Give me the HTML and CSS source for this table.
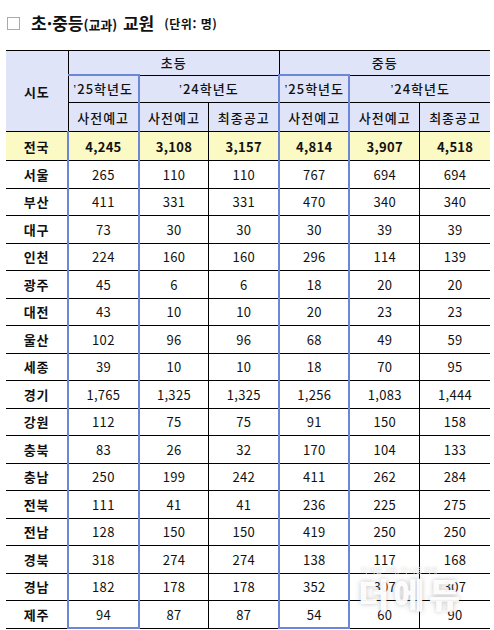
FILE: index.html
```html
<!DOCTYPE html>
<html lang="ko">
<head>
<meta charset="utf-8">
<link rel="stylesheet" href="styles.css">
</head>
<body>
<div class="page">
  <div class="title">
    <span class="box"></span>
    <span class="main">초·중등<span class="sub">(교과)</span> 교원</span>
    <span class="unit">(단위: 명)</span>
  </div>
  <table class="tbl">
    <colgroup>
      <col class="c0"><col class="c"><col class="c"><col class="c"><col class="c"><col class="c"><col class="c">
    </colgroup>
    <thead>
      <tr class="h1">
        <th rowspan="3" class="region">시도</th>
        <th colspan="3">초등</th>
        <th colspan="3">중등</th>
      </tr>
      <tr class="h2">
        <th class="hl hl-top"><span class="q">’</span>25학년도</th>
        <th colspan="2"><span class="q">’</span>24학년도</th>
        <th class="hl hl-top"><span class="q">’</span>25학년도</th>
        <th colspan="2"><span class="q">’</span>24학년도</th>
      </tr>
      <tr class="h3">
        <th class="hl">사전예고</th>
        <th>사전예고</th>
        <th>최종공고</th>
        <th class="hl">사전예고</th>
        <th>사전예고</th>
        <th>최종공고</th>
      </tr>
    </thead>
    <tbody>
      <tr class="total">
        <th>전국</th><td class="hl">4,245</td><td>3,108</td><td>3,157</td><td class="hl">4,814</td><td>3,907</td><td>4,518</td>
      </tr>
      <tr><th>서울</th><td class="hl">265</td><td>110</td><td>110</td><td class="hl">767</td><td>694</td><td>694</td></tr>
      <tr><th>부산</th><td class="hl">411</td><td>331</td><td>331</td><td class="hl">470</td><td>340</td><td>340</td></tr>
      <tr><th>대구</th><td class="hl">73</td><td>30</td><td>30</td><td class="hl">30</td><td>39</td><td>39</td></tr>
      <tr><th>인천</th><td class="hl">224</td><td>160</td><td>160</td><td class="hl">296</td><td>114</td><td>139</td></tr>
      <tr><th>광주</th><td class="hl">45</td><td>6</td><td>6</td><td class="hl">18</td><td>20</td><td>20</td></tr>
      <tr><th>대전</th><td class="hl">43</td><td>10</td><td>10</td><td class="hl">20</td><td>23</td><td>23</td></tr>
      <tr><th>울산</th><td class="hl">102</td><td>96</td><td>96</td><td class="hl">68</td><td>49</td><td>59</td></tr>
      <tr><th>세종</th><td class="hl">39</td><td>10</td><td>10</td><td class="hl">18</td><td>70</td><td>95</td></tr>
      <tr><th>경기</th><td class="hl">1,765</td><td>1,325</td><td>1,325</td><td class="hl">1,256</td><td>1,083</td><td>1,444</td></tr>
      <tr><th>강원</th><td class="hl">112</td><td>75</td><td>75</td><td class="hl">91</td><td>150</td><td>158</td></tr>
      <tr><th>충북</th><td class="hl">83</td><td>26</td><td>32</td><td class="hl">170</td><td>104</td><td>133</td></tr>
      <tr><th>충남</th><td class="hl">250</td><td>199</td><td>242</td><td class="hl">411</td><td>262</td><td>284</td></tr>
      <tr><th>전북</th><td class="hl">111</td><td>41</td><td>41</td><td class="hl">236</td><td>225</td><td>275</td></tr>
      <tr><th>전남</th><td class="hl">128</td><td>150</td><td>150</td><td class="hl">419</td><td>250</td><td>250</td></tr>
      <tr><th>경북</th><td class="hl">318</td><td>274</td><td>274</td><td class="hl">138</td><td>117</td><td>168</td></tr>
      <tr><th>경남</th><td class="hl">182</td><td>178</td><td>178</td><td class="hl">352</td><td>307</td><td>307</td></tr>
      <tr class="last"><th>제주</th><td class="hl">94</td><td>87</td><td>87</td><td class="hl">54</td><td>60</td><td>90</td></tr>
    </tbody>
  </table>
  <div class="watermark">
    <div class="wm-small">더 바른 교육, 더 나은 미래</div>
    <div class="wm-big">더에듀</div>
  </div>
</div>
</body>
</html>
```

FILE: styles.css
```css
html, body {
  margin: 0;
  padding: 0;
  background: #ffffff;
}

.page {
  position: relative;
  width: 494px;
  height: 630px;
  overflow: hidden;
  font-family: "Noto Sans CJK KR", "Noto Sans", sans-serif;
  color: #111;
}

.title {
  display: flex;
  align-items: center;
  height: 44px;
  padding-left: 7px;
  padding-top: 1px;
  box-sizing: border-box;
}

.box {
  width: 11px;
  height: 11px;
  border: 1px solid #c9a66e;
  margin-right: 11px;
  margin-top: 1px;
}

.main {
  font-weight: 700;
  font-size: 17px;
  letter-spacing: 0;
}

.sub {
  font-size: 13px;
  font-weight: 700;
  margin-right: 1px;
}

.unit {
  font-size: 12px;
  font-weight: 700;
  margin-left: 10px;
  margin-top: 2px;
  letter-spacing: 0.5px;
}

.tbl {
  margin-left: 6px;
  margin-top: 6px;
  width: 484px;
  border-collapse: collapse;
  table-layout: fixed;
  font-size: 13px;
}

.c0 { width: 62px; }
.c { width: 70px; }

.tbl th,
.tbl td {
  padding: 0;
  text-align: center;
  vertical-align: middle;
  border: 1px solid #000;
  line-height: 1;
}

.tbl tr > :first-child { border-left: none; }
.tbl tr > :last-child { border-right: none; }
.tbl thead th { border-top: 1px solid #000; }

.tbl thead th {
  background: #dfe4f8;
  font-weight: 500;
  letter-spacing: 1px;
}

.tbl thead th.region { font-weight: 700; letter-spacing: 1px; border-left: none; }

.q {
  font-family: "Liberation Sans", sans-serif;
  font-size: 13px;
}

.h1 th { height: 23px; }
.h2 th { height: 26px; letter-spacing: 0; }
.h3 th { height: 28px; }

.tbl tbody th {
  font-weight: 700;
  font-size: 13px;
  letter-spacing: 1px;
  background: #fff;
}

.tbl tbody tr { height: 27.5px; }

.tbl tbody td {
  font-weight: 400;
  font-size: 13px;
  letter-spacing: 0.3px;
}

.tbl tbody tr.total { height: 29px; }
.tbl tbody tr.total th,
.tbl tbody tr.total td {
  background: #fbf9c4;
  font-weight: 700;
}

.tbl .hl {
  border-left: 2px solid #6b87d7;
  border-right: 2px solid #6b87d7;
}
.tbl .hl-top { border-top: 2px solid #6b87d7; }
.tbl tr.last .hl { border-bottom: 2px solid #6b87d7; }

.watermark {
  position: absolute;
  left: 336px;
  top: 566px;
  width: 150px;
  text-align: center;
  pointer-events: none;
}

.wm-small {
  font-size: 7px;
  line-height: 8px;
  color: rgba(255,255,255,0.95);
  text-shadow: 0 0 2px rgba(150,150,150,0.6);
  margin-left: -24px;
}

.wm-big {
  font-size: 34px;
  font-weight: 900;
  line-height: 40px;
  color: rgba(255,255,255,0.96);
  letter-spacing: 4px;
  text-shadow: 0 0 5px rgba(120,120,120,0.45);
}
```
